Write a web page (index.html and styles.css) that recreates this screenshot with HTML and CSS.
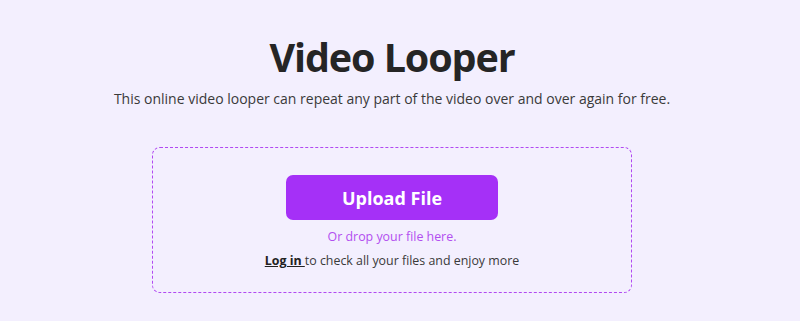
FILE: index.html
```html
<!DOCTYPE html>
<html lang="en">
<head>
<meta charset="utf-8">
<title>Video Looper</title>
<link rel="stylesheet" href="styles.css">
</head>
<body>
<main class="hero">
  <h1 class="title">Video Looper</h1>
  <p class="subtitle">This online video looper can repeat any part of the video over and over again for free.</p>
  <div class="dropzone">
    <button class="upload-btn" type="button">Upload File</button>
    <p class="drop-hint">Or drop your file here.</p>
    <p class="login-line"><a class="login-link" href="#">Log in </a>to check all your files and enjoy more</p>
  </div>
</main>
</body>
</html>
```
FILE: styles.css
```css
html, body {
  margin: 0;
  padding: 0;
}
body {
  background: #f3effe;
  font-family: "Open Sans", "Noto Sans", sans-serif;
  color: #333;
  width: 800px;
  height: 321px;
  overflow: hidden;
}
.hero {
  width: 784px;
  display: flex;
  flex-direction: column;
  align-items: center;
  padding-top: 30px;
}
.title {
  margin: 0;
  font-size: 39.5px;
  line-height: 55px;
  font-weight: 700;
  letter-spacing: -1.1px;
  color: #252525;
}
.subtitle {
  margin: 4px 0 0;
  font-size: 14px;
  line-height: 20px;
  color: #3a3a3a;
}
.dropzone {
  box-sizing: border-box;
  margin-top: 38px;
  width: 480px;
  height: 146px;
  border: 1px dashed #b148f2;
  border-radius: 8px;
  display: flex;
  flex-direction: column;
  align-items: center;
  padding-top: 27px;
}
.upload-btn {
  width: 212px;
  height: 45px;
  border: none;
  border-radius: 7px;
  background: #a530f7;
  color: #fff;
  font-family: inherit;
  font-size: 18px;
  font-weight: 700;
  cursor: pointer;
}
.drop-hint {
  margin: 7px 0 0;
  font-size: 12.4px;
  line-height: 20px;
  color: #b24ef0;
}
.login-line {
  margin: 4px 0 0;
  font-size: 12.4px;
  line-height: 20px;
  color: #3a3a3a;
}
.login-link {
  color: #222;
  font-weight: 700;
  text-decoration: underline;
}
```
